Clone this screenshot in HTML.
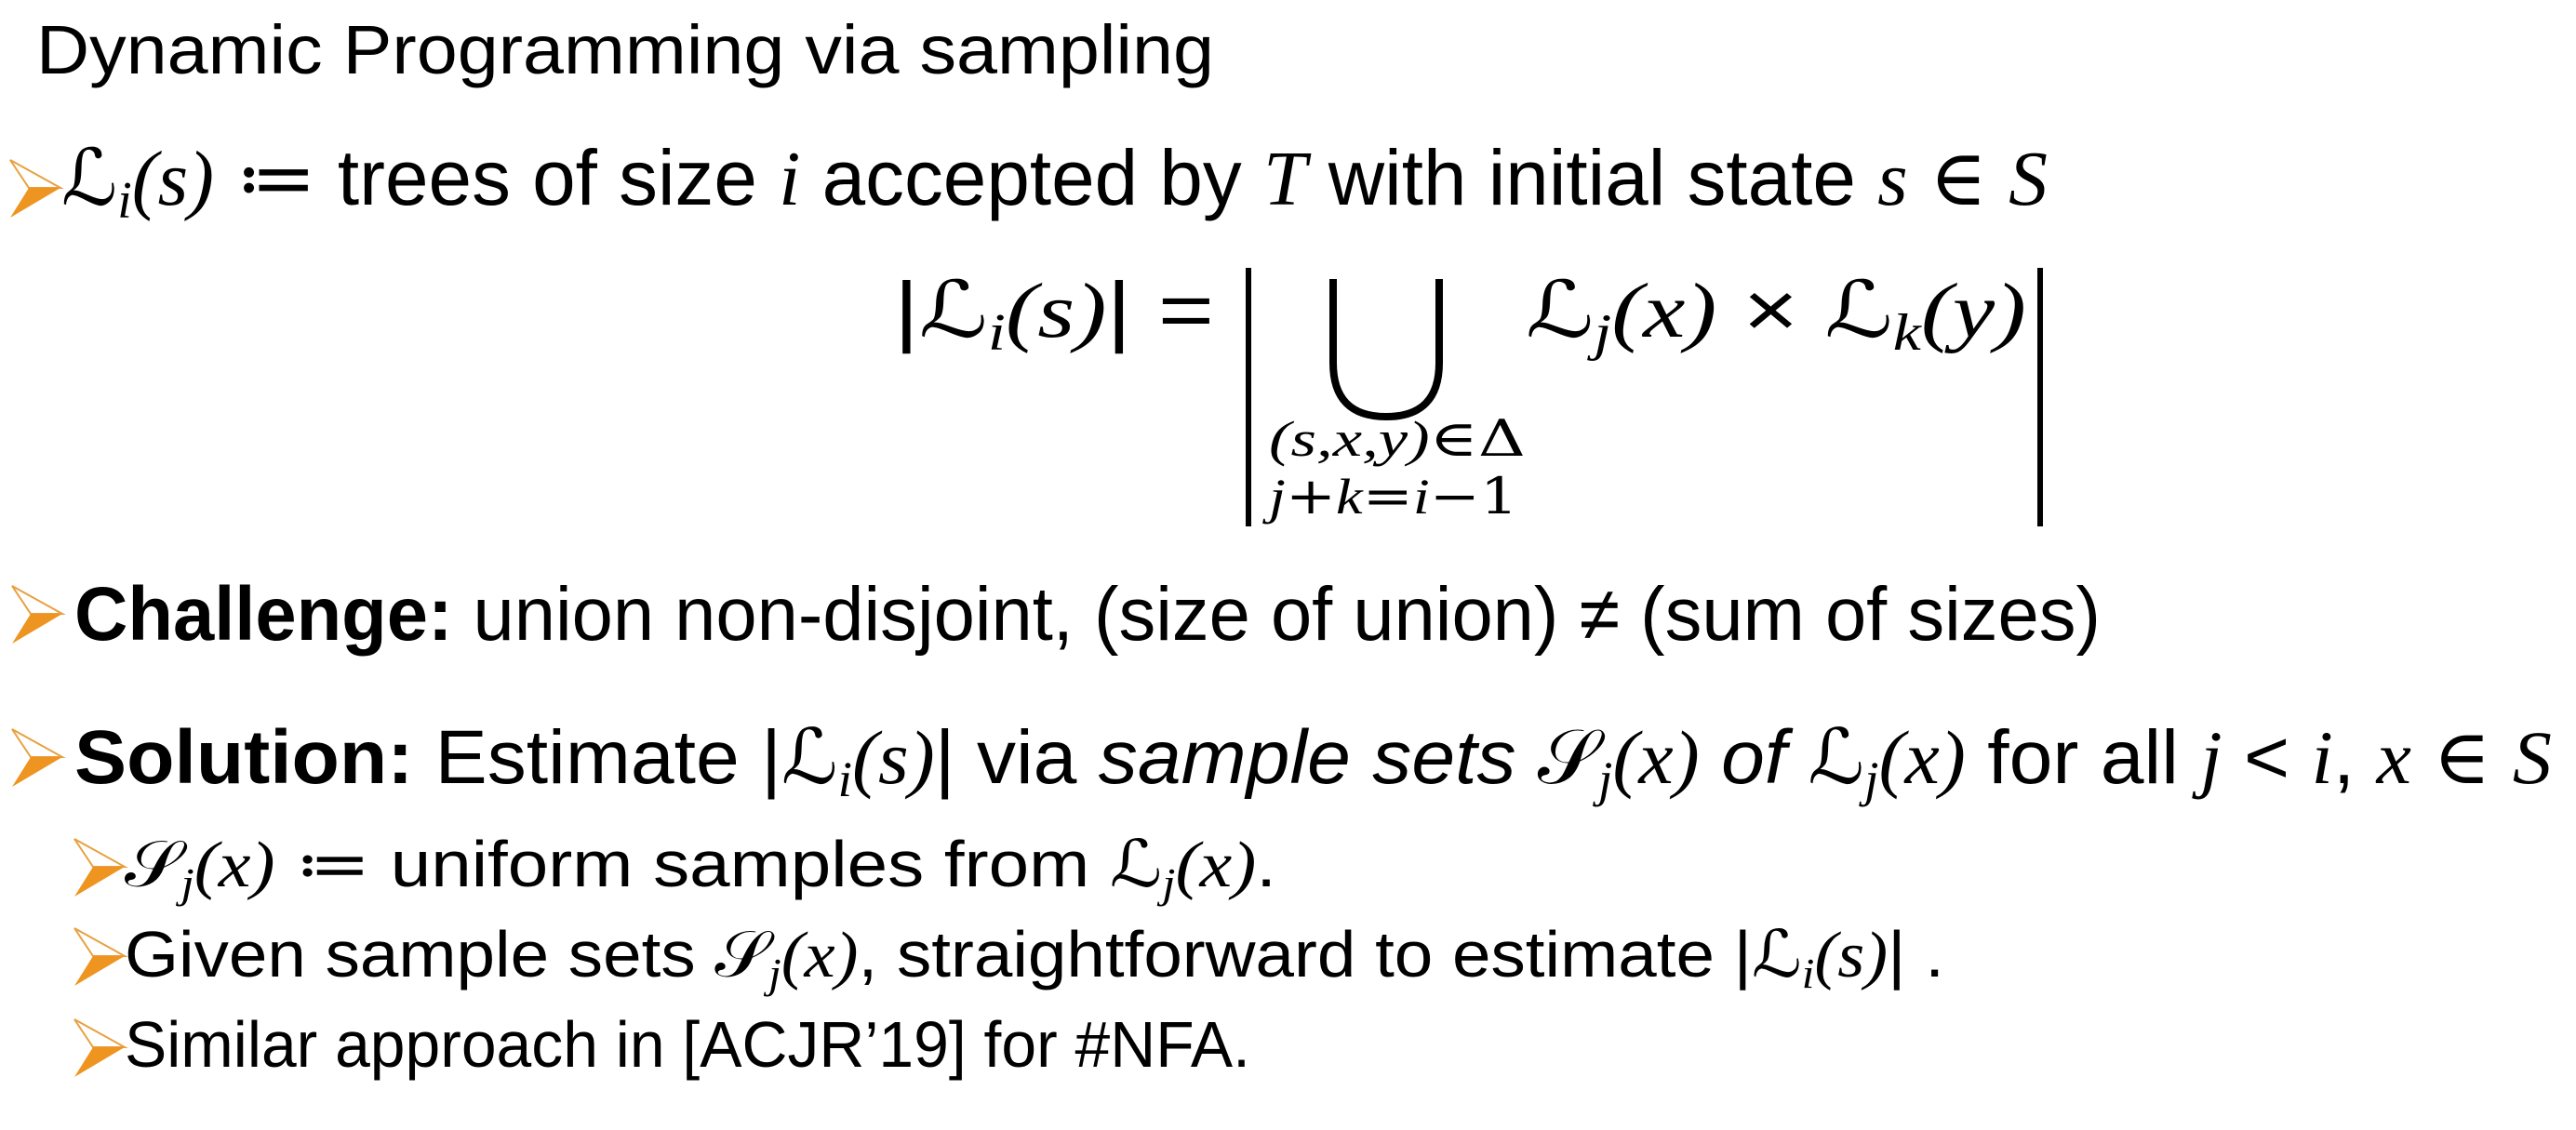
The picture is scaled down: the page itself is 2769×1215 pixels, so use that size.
<!DOCTYPE html>
<html><head><meta charset="utf-8"><style>
html,body{margin:0;padding:0;background:#fff;}
svg{display:block;}
.t{font-family:"Liberation Sans","DejaVu Sans",sans-serif;fill:#000;}
.m{font-family:"Liberation Serif","DejaVu Serif",serif;font-style:italic;}
.u{font-family:"DejaVu Serif",serif;font-style:normal;}
</style></head><body>
<svg width="2769" height="1215" viewBox="0 0 2769 1215" xmlns="http://www.w3.org/2000/svg">
<defs>
<g id="arr">
<polygon points="0,0 54,30 20,30" fill="#fff" stroke="#E8A040" stroke-width="2"/>
<polygon points="0,62 54,30 20,30" fill="#EE9420"/>
</g>
</defs>

<text class="t" x="39" y="79" font-size="74" textLength="1266" lengthAdjust="spacingAndGlyphs">Dynamic Programming via sampling</text>

<use href="#arr" x="11" y="172"/>
<text class="t" x="66" y="220" font-size="84" textLength="2135" lengthAdjust="spacingAndGlyphs"><tspan class="u">ℒ</tspan><tspan class="m" font-size="56" dy="14">i</tspan><tspan class="m" dy="-14">(s)</tspan> <tspan class="u">≔</tspan> trees of size <tspan class="m">i</tspan> accepted by <tspan class="m">T</tspan> with initial state <tspan class="m">s</tspan> <tspan class="u">∈</tspan> <tspan class="m">S</tspan></text>

<text class="t" x="961" y="362" font-size="84" textLength="344" lengthAdjust="spacingAndGlyphs">|<tspan class="u">ℒ</tspan><tspan class="m" font-size="56" dy="14">i</tspan><tspan class="m" dy="-14">(s)</tspan>| =</text>
<line x1="1342" y1="288" x2="1342" y2="566" stroke="#000" stroke-width="6"/>
<line x1="2193" y1="288" x2="2193" y2="566" stroke="#000" stroke-width="6"/>
<path d="M1433,300 L1433,390 Q1433,448 1490,448 Q1547,448 1547,390 L1547,300" fill="none" stroke="#000" stroke-width="8"/>
<text class="t m" x="1364" y="490" font-size="54" textLength="276" lengthAdjust="spacingAndGlyphs">(s,x,y)<tspan class="u">∈Δ</tspan></text>
<text class="t m" x="1364" y="552" font-size="54" textLength="268" lengthAdjust="spacingAndGlyphs">j<tspan class="u">+</tspan>k<tspan class="u">=</tspan>i<tspan class="u">−1</tspan></text>
<text class="t" x="1640" y="362" font-size="84" textLength="538" lengthAdjust="spacingAndGlyphs"><tspan class="u">ℒ</tspan><tspan class="m" font-size="56" dy="14">j</tspan><tspan class="m" dy="-14">(x)</tspan> × <tspan class="u">ℒ</tspan><tspan class="m" font-size="56" dy="14">k</tspan><tspan class="m" dy="-14">(y)</tspan></text>

<use href="#arr" x="13" y="630"/>
<text class="t" x="80" y="688" font-size="82" textLength="2178" lengthAdjust="spacingAndGlyphs"><tspan font-weight="bold">Challenge:</tspan> union non-disjoint, (size of union) ≠ (sum of sizes)</text>

<use href="#arr" x="13" y="784"/>
<text class="t" x="80" y="842" font-size="82" textLength="2663" lengthAdjust="spacingAndGlyphs"><tspan font-weight="bold">Solution:</tspan> Estimate |<tspan class="u">ℒ</tspan><tspan class="m" font-size="54" dy="14">i</tspan><tspan class="m" dy="-14">(s)</tspan>| via <tspan font-style="italic">sample sets </tspan><tspan class="u">𝒮</tspan><tspan class="m" font-size="54" dy="14">j</tspan><tspan class="m" dy="-14">(x)</tspan><tspan font-style="italic"> of </tspan><tspan class="u">ℒ</tspan><tspan class="m" font-size="54" dy="14">j</tspan><tspan class="m" dy="-14">(x)</tspan> for all <tspan class="m">j</tspan> &lt; <tspan class="m">i</tspan>, <tspan class="m">x</tspan> <tspan class="u">∈</tspan> <tspan class="m">S</tspan></text>

<use href="#arr" x="80" y="902" transform="translate(0,0)"/>
<text class="t" x="134" y="953" font-size="70" textLength="1238" lengthAdjust="spacingAndGlyphs"><tspan class="u">𝒮</tspan><tspan class="m" font-size="46" dy="12">j</tspan><tspan class="m" dy="-12">(x)</tspan>  <tspan class="u">≔</tspan> uniform samples from <tspan class="u">ℒ</tspan><tspan class="m" font-size="46" dy="12">j</tspan><tspan class="m" dy="-12">(x)</tspan>.</text>

<use href="#arr" x="80" y="998"/>
<text class="t" x="134" y="1050" font-size="70" textLength="1956" lengthAdjust="spacingAndGlyphs">Given sample sets <tspan class="u">𝒮</tspan><tspan class="m" font-size="46" dy="12">j</tspan><tspan class="m" dy="-12">(x)</tspan>, straightforward to estimate |<tspan class="u">ℒ</tspan><tspan class="m" font-size="46" dy="12">i</tspan><tspan class="m" dy="-12">(s)</tspan>| .</text>

<use href="#arr" x="80" y="1096"/>
<text class="t" x="134" y="1147" font-size="70" textLength="1210" lengthAdjust="spacingAndGlyphs">Similar approach in [ACJR’19] for #NFA.</text>
</svg>
</body></html>
